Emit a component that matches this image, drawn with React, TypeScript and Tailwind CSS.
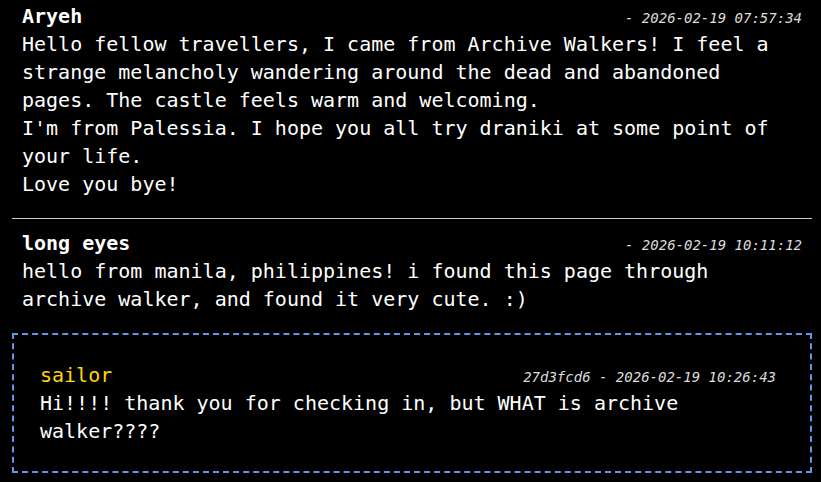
import React from "react";

const mono = { fontFamily: '"DejaVu Sans Mono", monospace' };

function Header({ name, stamp, nameClass }: { name: string; stamp: string; nameClass: string }) {
  return (
    <div className="flex h-[28px] items-baseline justify-between leading-[28px]">
      <span className={nameClass}>{name}</span>
      <span className="text-[14px] leading-[14px] italic text-[#dddddd]">{stamp}</span>
    </div>
  );
}

export default function App() {
  return (
    <div className="min-h-screen bg-black text-white" style={mono}>
      <div className="ml-[12px] w-[800px] pt-[2px] text-[20px] leading-[28px]">
        <div className="px-[10px] pb-[20px]">
          <Header name="Aryeh" stamp="- 2026-02-19 07:57:34" nameClass="font-bold text-white" />
          <div className="text-white">
            Hello fellow travellers, I came from Archive Walkers! I feel a<br />
            strange melancholy wandering around the dead and abandoned<br />
            pages. The castle feels warm and welcoming.<br />
            I'm from Palessia. I hope you all try draniki at some point of<br />
            your life.<br />
            Love you bye!
          </div>
        </div>
        <div className="h-px bg-[#cccccc]" />
        <div className="px-[10px] pt-[10px] pb-[20px]">
          <Header name="long eyes" stamp="- 2026-02-19 10:11:12" nameClass="font-bold text-white" />
          <div className="text-white">
            hello from manila, philippines! i found this page through<br />
            archive walker, and found it very cute. :)
          </div>
        </div>
        <div className="border-2 border-dashed border-[#6495ed] pt-[26px] pb-[26px] pl-[26px] pr-[34px]">
          <Header name="sailor" stamp="27d3fcd6 - 2026-02-19 10:26:43" nameClass="text-[#ffd700]" />
          <div className="text-white">
            Hi!!!! thank you for checking in, but WHAT is archive<br />
            walker????
          </div>
        </div>
      </div>
    </div>
  );
}
